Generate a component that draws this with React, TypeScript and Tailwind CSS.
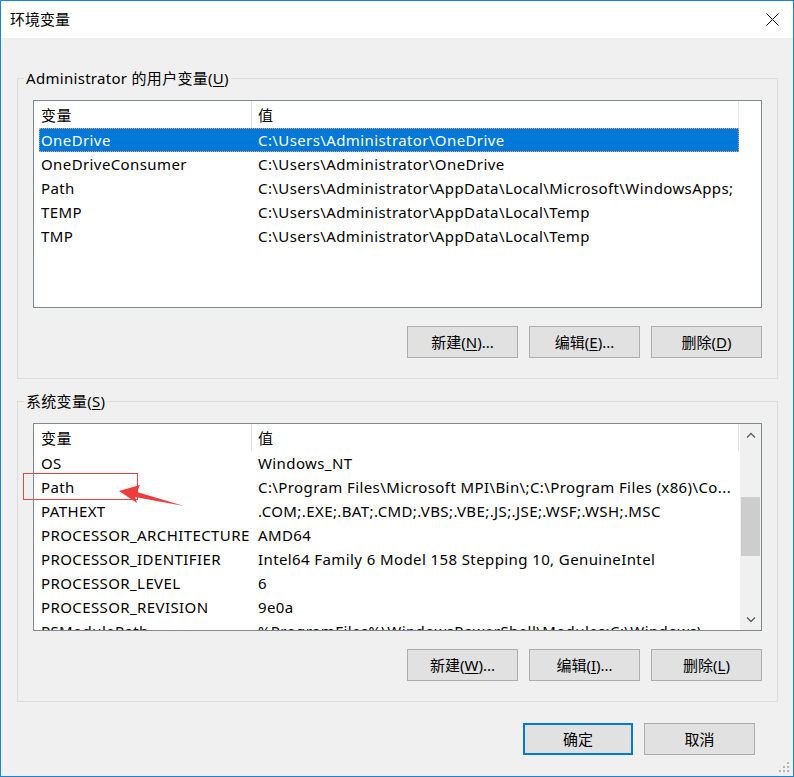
import React from "react";

type Row = { name: string; value: string };

const userVars: Row[] = [
  { name: "OneDrive", value: "C:\\Users\\Administrator\\OneDrive" },
  { name: "OneDriveConsumer", value: "C:\\Users\\Administrator\\OneDrive" },
  { name: "Path", value: "C:\\Users\\Administrator\\AppData\\Local\\Microsoft\\WindowsApps;" },
  { name: "TEMP", value: "C:\\Users\\Administrator\\AppData\\Local\\Temp" },
  { name: "TMP", value: "C:\\Users\\Administrator\\AppData\\Local\\Temp" },
];

const sysVars: Row[] = [
  { name: "OS", value: "Windows_NT" },
  { name: "Path", value: "C:\\Program Files\\Microsoft MPI\\Bin\\;C:\\Program Files (x86)\\Co..." },
  { name: "PATHEXT", value: ".COM;.EXE;.BAT;.CMD;.VBS;.VBE;.JS;.JSE;.WSF;.WSH;.MSC" },
  { name: "PROCESSOR_ARCHITECTURE", value: "AMD64" },
  { name: "PROCESSOR_IDENTIFIER", value: "Intel64 Family 6 Model 158 Stepping 10, GenuineIntel" },
  { name: "PROCESSOR_LEVEL", value: "6" },
  { name: "PROCESSOR_REVISION", value: "9e0a" },
  { name: "PSModulePath", value: "%ProgramFiles%\\WindowsPowerShell\\Modules;C:\\Windows\\..." },
];

function Btn({ label, hot, after }: { label: string; hot: string; after: string }) {
  return (
    <button className="w-[111px] h-[32px] bg-[#e1e1e1] border border-[#adadad] text-[15px] text-black flex items-center justify-center">
      {label}(<span className="underline underline-offset-2">{hot}</span>){after}
    </button>
  );
}

function VarList({ rows, selected, scroll }: { rows: Row[]; selected?: number; scroll?: boolean }) {
  return (
    <div className="h-[208px] border border-[#828790] bg-white flex overflow-hidden tracking-[0.4px]">
      <div className="flex-1 pl-[5px] overflow-hidden">
        <div className="flex h-[27px]">
          <div className="w-[213px] shrink-0 border-r border-[#e5e5e5] pl-[2px] pt-[2px] flex items-center">变量</div>
          <div className="w-[487px] shrink-0 border-r border-[#e5e5e5] pl-[6px] pt-[2px] flex items-center">值</div>
        </div>
        {rows.map((r, i) => (
          <div
            key={r.name}
            className={
              i === selected
                ? "flex h-[24px] w-[700px] items-center bg-[#0078d7] text-white outline outline-1 outline-dotted outline-[#f0a060] -outline-offset-1"
                : "flex h-[24px] w-[700px] items-center"
            }
          >
            <div className="w-[213px] shrink-0 pl-[2px] whitespace-nowrap">{r.name}</div>
            <div className="w-[487px] shrink-0 pl-[6px] whitespace-nowrap overflow-hidden">{r.value}</div>
          </div>
        ))}
      </div>
      {scroll ? (
        <div className="w-[21px] shrink-0 bg-[#f0f0f0] flex flex-col">
          <div className="h-[21px] flex items-center justify-center">
            <svg width="10" height="6" viewBox="0 0 10 6">
              <path d="M1 5.5 L5 1.5 L9 5.5" fill="none" stroke="#606060" strokeWidth="1.4" />
            </svg>
          </div>
          <div className="h-[52px]" />
          <div className="h-[59px] mx-[1px] bg-[#cdcdcd]" />
          <div className="flex-1" />
          <div className="h-[21px] flex items-center justify-center">
            <svg width="10" height="6" viewBox="0 0 10 6">
              <path d="M1 0.5 L5 4.5 L9 0.5" fill="none" stroke="#606060" strokeWidth="1.4" />
            </svg>
          </div>
        </div>
      ) : (
        <div className="w-[21px] shrink-0" />
      )}
    </div>
  );
}

export default function App() {
  return (
    <div
      className="relative w-[794px] h-[777px] border border-[#1883d7] bg-[#f0f0f0] flex flex-col text-[15px] text-black overflow-hidden"
      style={{ fontFamily: '"Noto Sans", "Noto Sans CJK SC", sans-serif' }}
    >
      {/* title bar */}
      <div className="h-[37px] bg-white flex items-center justify-between pl-[9px] pr-[14px] shrink-0">
        <span>环境变量</span>
        <svg width="13" height="13" viewBox="0 0 13 13">
          <path d="M0.5 0.5 L12.5 12.5 M12.5 0.5 L0.5 12.5" stroke="#000" strokeWidth="1" />
        </svg>
      </div>

      <div className="pl-[16px] pr-[15px] flex flex-col">
        <fieldset className="mt-[30px] border border-[#dcdcdc] p-0 m-0 min-w-0">
          <legend className="ml-[6px] px-[2px] leading-[20px] tracking-[0.3px]">
            Administrator 的用户变量(<span className="underline underline-offset-2">U</span>)
          </legend>
          <div className="px-[15px] pt-[12px] pb-[20px]">
            <VarList rows={userVars} selected={0} />
            <div className="flex justify-end gap-[11px] mt-[18px]">
              <Btn label="新建" hot="N" after="..." />
              <Btn label="编辑" hot="E" after="..." />
              <Btn label="删除" hot="D" after="" />
            </div>
          </div>
        </fieldset>

        <fieldset className="mt-[12px] border border-[#dcdcdc] p-0 min-w-0">
          <legend className="ml-[6px] px-[2px] leading-[20px] tracking-[0.3px]">
            系统变量(<span className="underline underline-offset-2">S</span>)
          </legend>
          <div className="px-[15px] pt-[12px] pb-[20px]">
            <VarList rows={sysVars} scroll />
            <div className="flex justify-end gap-[11px] mt-[18px]">
              <Btn label="新建" hot="W" after="..." />
              <Btn label="编辑" hot="I" after="..." />
              <Btn label="删除" hot="L" after="" />
            </div>
          </div>
        </fieldset>

        <div className="flex justify-end gap-[11px] mt-[21px] pr-[23px]">
          <button className="w-[110px] h-[32px] bg-[#e1e1e1] border-2 border-[#0078d7] text-[15px]">确定</button>
          <button className="w-[111px] h-[32px] bg-[#e1e1e1] border border-[#adadad] text-[15px]">取消</button>
        </div>
      </div>

      {/* annotation: red box + arrow around Path */}
      <div className="absolute left-[22px] top-[472px] w-[115px] h-[27px] border border-[#e04848]" />
      <svg className="absolute left-0 top-0" width="794" height="777" viewBox="0 0 794 777" pointerEvents="none">
        <polygon points="118,490 139,484 136,491 183,505 134,496 136,502" fill="#ee3b3b" />
      </svg>

      {/* resize grip */}
      <svg className="absolute right-[3px] bottom-[3px]" width="12" height="12" viewBox="0 0 12 12">
        <rect x="9" y="1" width="2" height="2" fill="#b8b8b8" />
        <rect x="5" y="5" width="2" height="2" fill="#b8b8b8" />
        <rect x="9" y="5" width="2" height="2" fill="#b8b8b8" />
        <rect x="1" y="9" width="2" height="2" fill="#b8b8b8" />
        <rect x="5" y="9" width="2" height="2" fill="#b8b8b8" />
        <rect x="9" y="9" width="2" height="2" fill="#b8b8b8" />
      </svg>
    </div>
  );
}
